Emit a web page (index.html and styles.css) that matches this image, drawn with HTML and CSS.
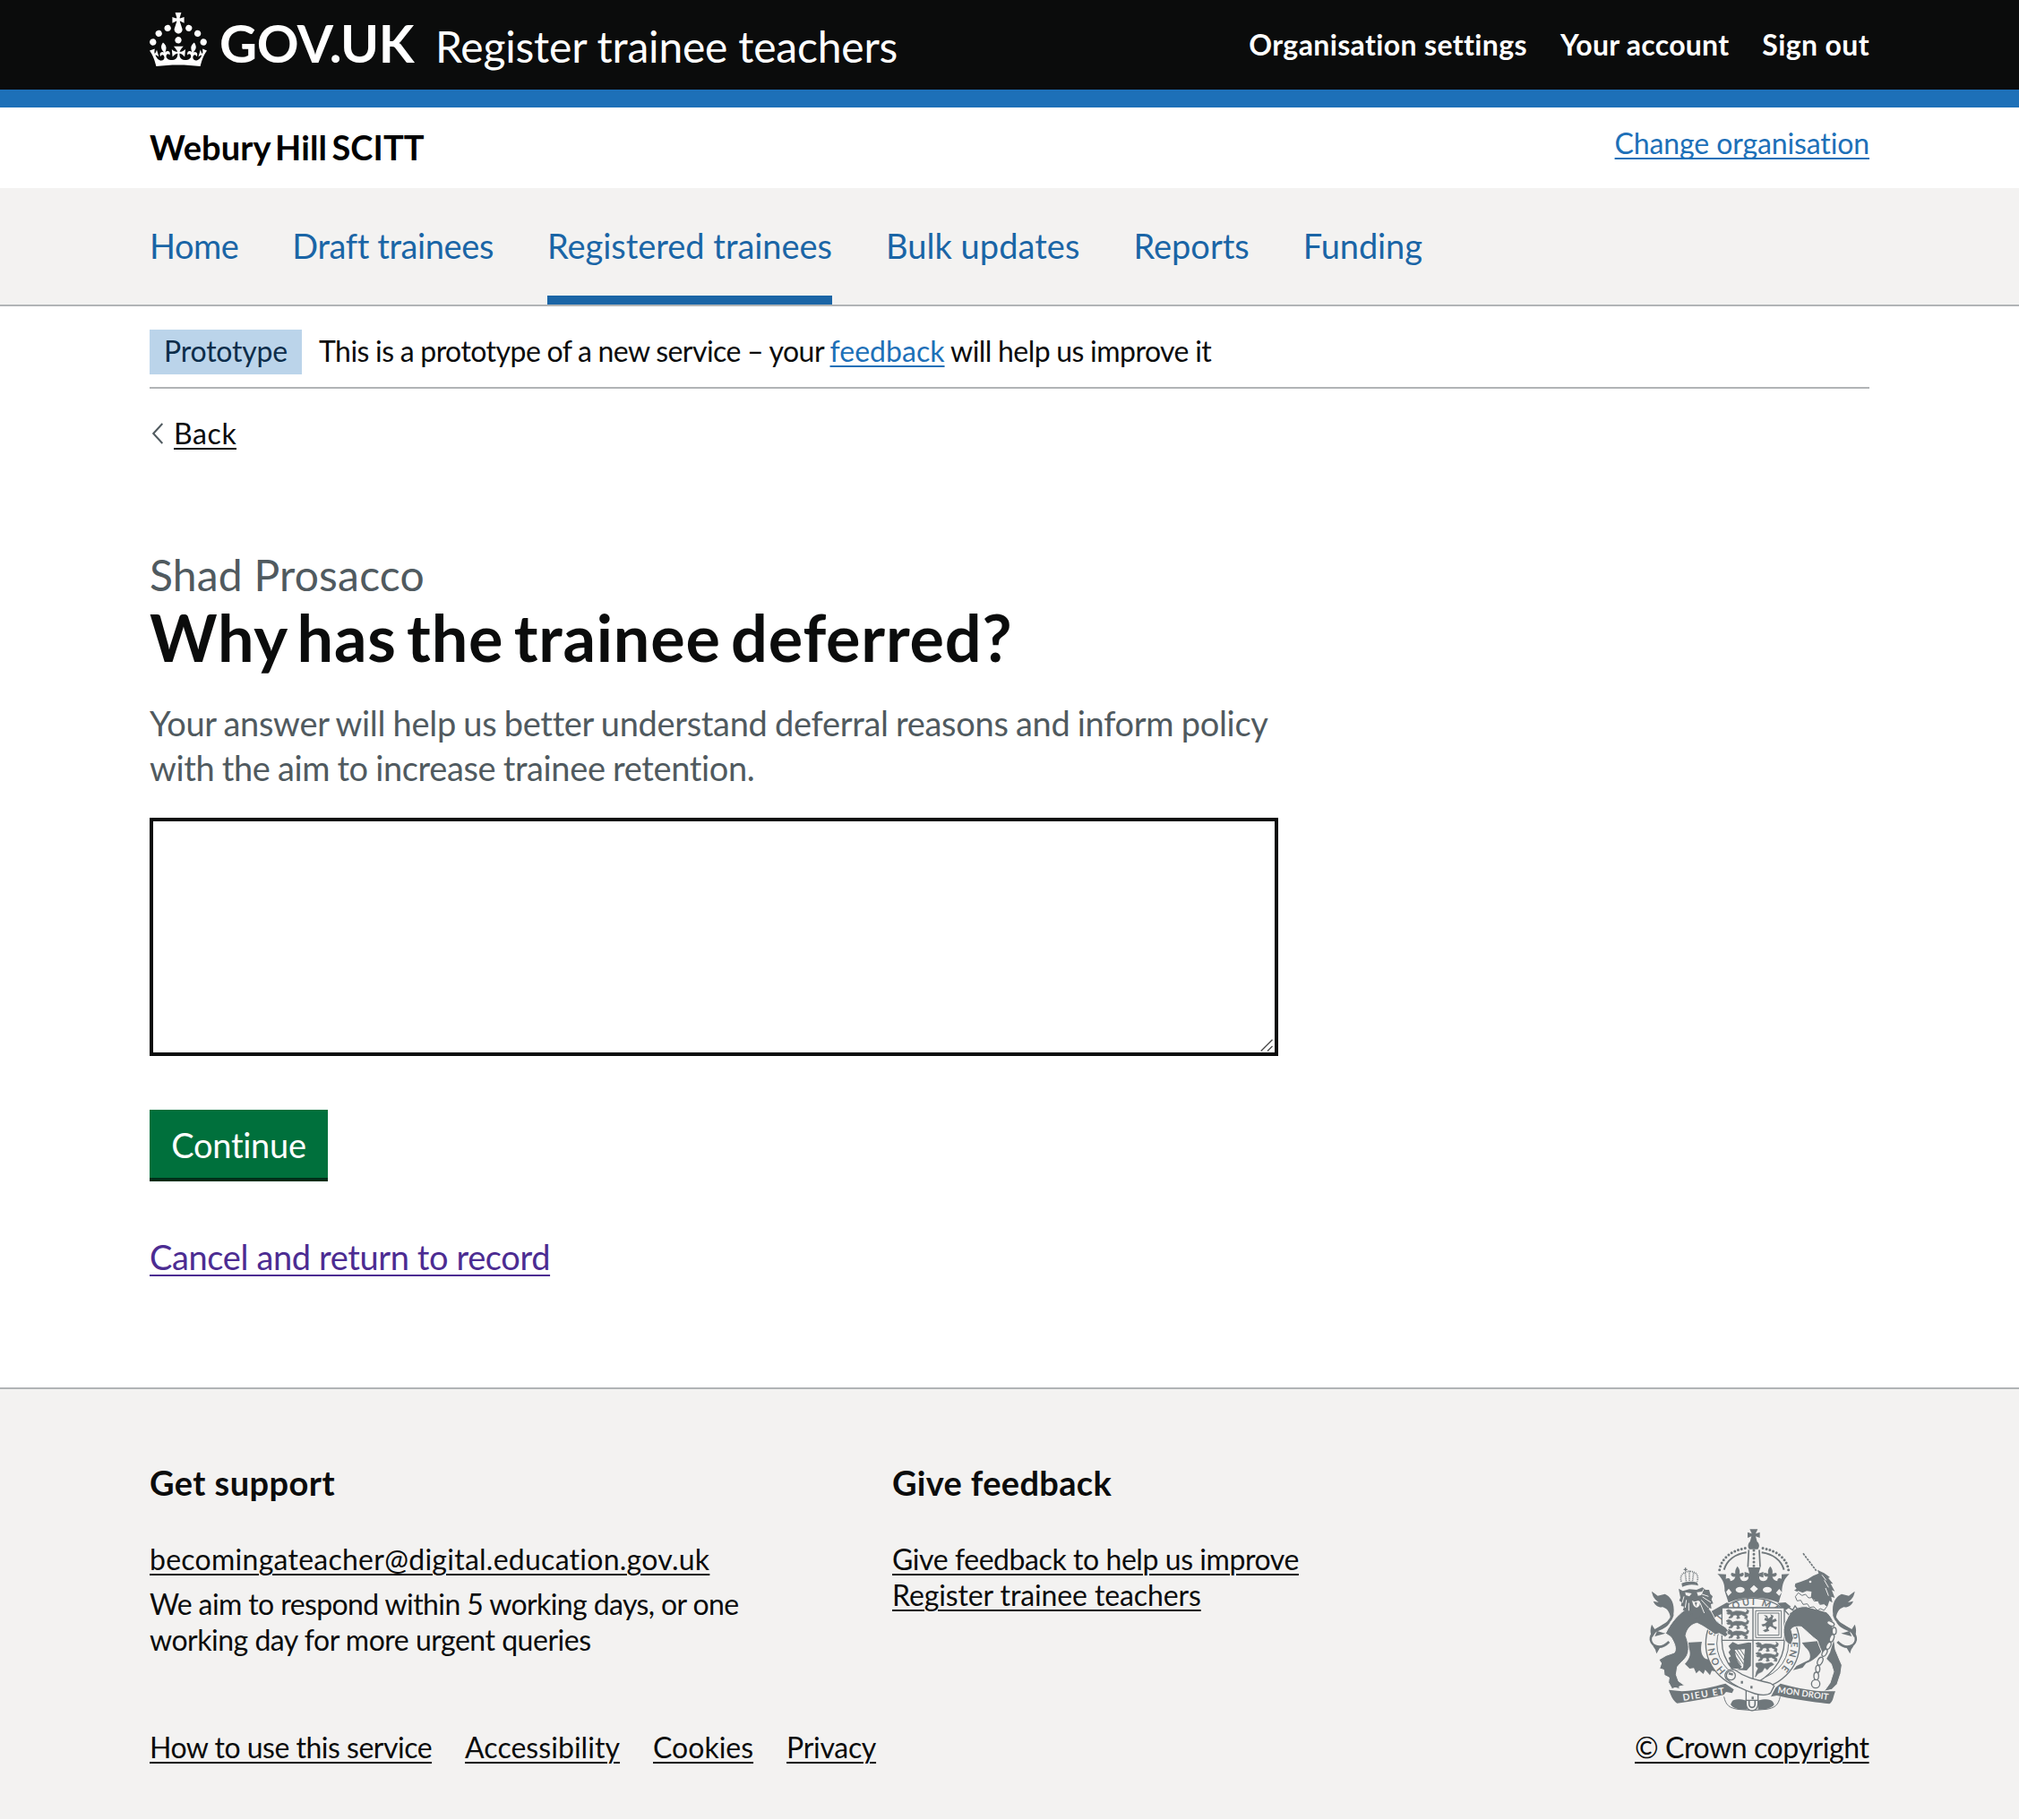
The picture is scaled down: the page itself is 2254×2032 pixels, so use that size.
FILE: index.html
```html
<!DOCTYPE html>
<html lang="en">
<head>
<meta charset="utf-8">
<title>Why has the trainee deferred? - Register trainee teachers</title>
<link rel="stylesheet" href="styles.css">
</head>
<body>
<header class="header">
  <div class="container header-inner">
    <a class="logo" href="#">
      <svg class="crown" viewBox="0 0 32 30" aria-hidden="true"><path fill="currentColor" d="M22.6 10.4c-1 .4-2-.1-2.4-1-.4-.9.1-2 1-2.4.9-.4 2 .1 2.4 1s-.1 2-1 2.4m-5.9 6.7c-.9.4-2-.1-2.4-1-.4-.9.1-2 1-2.4.9-.4 2 .1 2.4 1s-.1 2-1 2.4m10.8-3.7c-1 .4-2-.1-2.4-1-.4-.9.1-2 1-2.4.9-.4 2 .1 2.4 1s0 2-1 2.4m3.3 4.8c-1 .4-2-.1-2.4-1-.4-.9.1-2 1-2.4.9-.4 2 .1 2.4 1s-.1 2-1 2.4M17 4.7l2.3 1.2V2.5l-2.3.7-.2-.2.9-3h-3.4l.9 3-.2.2c-.1.1-2.3-.7-2.3-.7v3.4L15 4.7c.1.1.1.2.2.2l-1.3 4c-.1.2-.1.4-.1.6 0 1.1.8 2 1.9 2.2h.7c1-.2 1.9-1.1 1.9-2.1 0-.2 0-.4-.1-.6l-1.3-4c-.1-.2 0-.2.1-.3m-7.6 5.7c.9.4 2-.1 2.4-1 .4-.9-.1-2-1-2.4-.9-.4-2 .1-2.4 1s0 2 1 2.4m-5 3c.9.4 2-.1 2.4-1 .4-.9-.1-2-1-2.4-.9-.4-2 .1-2.4 1s.1 2 1 2.4m-3.2 4.8c.9.4 2-.1 2.4-1 .4-.9-.1-2-1-2.4-.9-.4-2 .1-2.4 1s0 2 1 2.4m14.8 11c4.4 0 8.6.3 12.3.8 1.1-4.5 2.4-7 3.7-8.8l-2.5-.9c.2 1.3.3 1.9 0 2.7-.4-.4-.8-1.1-1.1-2.3l-1.2 4c.7-.5 1.3-.8 2-.9-1.1 2.5-2.6 3.1-3.5 3-1.1-.2-1.7-1.2-1.5-2.1.3-1.2 1.5-1.5 2.1-.1 1.1-2.3-.8-3-2-2.3 1.9-1.9 2.1-3.5.6-5.6-2.1 1.6-2.1 3.2-1.2 5.5-1.2-1.4-3.2-.6-2.5 1.6.9-1.4 2.1-.5 1.9.8-.2 1.1-1.7 2.1-3.5 1.9-2.7-.2-2.9-2.1-2.9-3.6.7-.1 1.9.5 2.9 1.9l.4-4.3c-1.1 1.1-2.1 1.4-3.2 1.4.4-1.2 2.1-3 2.1-3h-5.4s1.7 1.9 2.1 3c-1.1 0-2.1-.2-3.2-1.4l.4 4.3c1-1.4 2.2-2 2.9-1.9-.1 1.5-.2 3.4-2.9 3.6-1.9.2-3.4-.8-3.5-1.9-.2-1.3 1-2.2 1.9-.8.7-2.3-1.2-3-2.5-1.6.9-2.2.9-3.9-1.2-5.5-1.5 2-1.3 3.7.6 5.6-1.2-.7-3.1 0-2 2.3.6-1.4 1.8-1.1 2.1.1.2.9-.3 1.9-1.5 2.1-.9.2-2.4-.5-3.5-3 .6 0 1.2.3 2 .9l-1.2-4c-.3 1.1-.7 1.9-1.1 2.3-.3-.8-.2-1.4 0-2.7l-2.9.9C1.3 23 2.6 25.5 3.7 30c3.7-.5 7.9-.8 12.3-.8"/></svg>
      <span class="logotype">GOV.UK</span>
    </a>
    <a class="service" href="#">Register trainee teachers</a>
    <nav class="account">
      <a href="#">Organisation settings</a>
      <a class="account-user" href="#">Your account</a>
      <a href="#">Sign out</a>
    </nav>
  </div>
</header>

<div class="container org">
  <div class="org-name">Webury Hill SCITT</div>
  <a class="link org-change" href="#">Change organisation</a>
</div>

<nav class="primary">
  <div class="container primary-list">
    <a class="home" href="#">Home</a>
    <a class="draft" href="#">Draft trainees</a>
    <a class="registered current" href="#">Registered trainees</a>
    <a class="bulk" href="#">Bulk updates</a>
    <a class="reports" href="#">Reports</a>
    <a class="funding" href="#">Funding</a>
  </div>
</nav>

<div class="container">
  <div class="phase">
    <strong class="tag">Prototype</strong>
    <span class="phase-text">This is a prototype of a new service – your <a class="link feedback" href="#">feedback</a> will help us improve it</span>
  </div>
  <a class="back" href="#"><svg class="chevron" viewBox="0 0 14 24" aria-hidden="true"><path d="M12.3 1 2.2 12l10.1 11" fill="none" stroke="#505a5f" stroke-width="2"/></svg><span class="back-text">Back</span></a>

  <main class="main">
    <h1 class="title"><span class="caption">Shad Prosacco</span>Why has the trainee deferred?</h1>
    <p class="hint"><span class="hint-first">Your answer will help us better understand deferral reasons and inform policy</span><br>with the aim to increase trainee retention.</p>
    <div class="field">
      <textarea class="textarea" aria-label="Why has the trainee deferred?"></textarea>
      <svg class="grip" viewBox="0 0 14 14" aria-hidden="true"><path d="M.7 13.5 13.5.7M8 13.5 13.5 8" fill="none" stroke="#4a4a4a" stroke-width="1.3"/></svg>
    </div>
    <button class="button" type="button">Continue</button>
    <p class="cancel"><a class="link" href="#">Cancel and return to record</a></p>
  </main>
</div>

<footer class="footer">
  <div class="container footer-inner">
    <div class="footer-main">
      <div class="footer-columns">
        <section>
          <h2 class="footer-heading support">Get support</h2>
          <a class="link email" href="#">becomingateacher@digital.education.gov.uk</a>
          <p class="footer-note">We aim to respond within 5 working days, or one<br><span class="note-last">working day for more urgent queries</span></p>
        </section>
        <section>
          <h2 class="footer-heading">Give feedback</h2>
          <a class="link give" href="#">Give feedback to help us improve<br><span class="give-last">Register trainee teachers</span></a>
        </section>
      </div>
      <nav class="footer-links">
        <a class="link howto" href="#">How to use this service</a>
        <a class="link access" href="#">Accessibility</a>
        <a class="link cookies" href="#">Cookies</a>
        <a class="link privacy" href="#">Privacy</a>
      </nav>
    </div>
    <div class="copyright">
      <svg class="crest" viewBox="-15 21 786 618" aria-hidden="true">
        <defs>
          <path id="motto" d="M291 499A128 128 0 1 1 469 499"/>
          <path id="passant" d="M0 4l8-4 9 3 4 6 12-4 18 1 14 4 6-6-3-5 8 5-2 9-10 4 8 5-2 9-9-2 4-5-13-7-10 3 4 9-9 2-2-4 4-2-5-7-9 1-5 8-11 2 2-5 5-2-2-7-8 1-4-4 6-2z"/>
          <g id="tail">
            <path d="M100 402C66 436 34 412 39 386c5-30 66-34 73-76" fill="none" stroke="#6f777b" stroke-width="8"/>
            <path d="M42 233l20 15 24-6c18 8 34 28 29 66l-10 24c0-24-8-40-26-46-14 2-26-5-32-20l18 4c-10-8-20-16-23-37zM42 344l10 16 32-18 20-6c-10 18-28 26-48 32l-12 20c-8-14-8-28-2-44zM60 366l28 8-36 10zM52 414l20 4-14 24-4-14-8-12z"/>
          </g>
        </defs>
        <g fill="#6f777b">
          <!-- royal crown -->
          <path d="M370 25h27l-7 15 14-5v19l-14-5 5 18c8 6 9 18 2 25h-28c-7-7-5-19 2-25l5-18-13 5V35l14 5z"/>
          <path d="M367 94l-3 58M402 94l3 58" stroke="#6f777b" stroke-width="5"/>
          <path d="M384 96v55" fill="none" stroke="#6f777b" stroke-width="9" stroke-linecap="round" stroke-dasharray="0 13"/>
          <path d="M269 161c6-38 40-66 90-73M500 161c-6-38-40-66-90-73" fill="none" stroke="#6f777b" stroke-width="9" stroke-linecap="round" stroke-dasharray="0 12"/>
          <path d="M284 161c10-32 38-53 75-58M485 161c-10-32-38-53-75-58" fill="none" stroke="#6f777b" stroke-width="6"/>
          <path d="M264 175l27 1-1 15c10-5 16-1 15 8 9-1 15-6 17-15-14 3-18-8-12-13l12 3c-2-10 2-18 7-25 6 7 9 15 7 25l12-4c5 8 1 15-11 14 1 9 6 15 14 15 11 0 16-6 15-15l-13 3v-19l16 5-5-20h42l-6 20 16-5v19l-14-4c-1 10 5 16 15 16 9-1 13-7 14-15-12 1-17-7-12-14l13 4c-2-10 1-18 7-25 6 7 9 15 7 25l12-3c6 5 2 15-12 13 2 9 8 14 17 15-1-9 5-13 14-8v-15l26-1c-16 15-25 32-25 60l-11 36c-58-22-114-22-168 0l-13-40c1-24-8-41-24-56z"/>
          <g fill="#f3f2f1">
            <ellipse cx="338" cy="228" rx="15" ry="10"/><ellipse cx="429" cy="228" rx="15" ry="10"/>
            <path d="M371 225l13-13 14 13-14 13zM291 235l9-11 10 13-12 12zM458 238l11-13 9 11-9 12z"/>
          </g>
          <!-- supporters' tails -->
          <use href="#tail"/>
          <use href="#tail" transform="matrix(-1 0 0 1 764 0)"/>
          <!-- hind legs -->
          <path d="M157 405l53-3c-6 25-3 48 14 58l40 4-8 17 11 23-24-5-6 15-16-18-6 14-14-12-10 10-8-18-14 2-16-16c18-18 24-40 8-60z"/>
          <path d="M545 405l52-5 20 22c-12 26-34 44-58 52l-12 15-32 8 12-14 42-20c8-12 2-32-13-43z"/>
          <!-- garter -->
          <ellipse cx="380" cy="408" rx="157" ry="152" fill="#f3f2f1" stroke="#6f777b" stroke-width="4"/>
          <circle cx="380" cy="408" r="120" fill="none" stroke="#6f777b" stroke-width="3"/>
          <text class="motto"><textPath href="#motto" textLength="598">HONI SOIT QUI MAL Y PENSE</textPath></text>
          <path d="M235 326l8-27 50-28 8 2-2 26-42 18zM462 272l28-2 18 14-20 14z"/>
          <!-- shield -->
          <path d="M277 288h209v112c0 76-60 124-105 146-45-22-104-70-104-146z" fill="#f3f2f1" stroke="#6f777b" stroke-width="4"/>
          <path d="M381 288v258M277 397h209" stroke="#6f777b" stroke-width="4"/>
          <g stroke="#6f777b" stroke-width="2">
            <use href="#passant" x="291" y="294"/><use href="#passant" x="291" y="328"/><use href="#passant" x="291" y="361"/>
            <use href="#passant" x="390" y="404"/><use href="#passant" x="390" y="437"/>
            <path d="M391 474l16-2 12 4 24-4 8 6-14 8-8 10-9-8-8 14-13 6-10 12 4-18 6-11-8-7z"/>
          </g>
          <path d="M390 298h86v90h-86zM398 306h70v74h-70z" fill="none" stroke="#6f777b" stroke-width="3"/>
          <path d="M417 312l12 3 3 10 10-8-3-7 11 5-5 14 12-5 4 8-14 6 2 11 12 4-3 9-10-7-10-5-7 8 5 7-14 5-8-6 12-5-2-10-10 2-5-7 12-3 8-7-10-5 3-8 7 3z"/>
          <path d="M299 416l14-13 18 8 36-7 8 2-1 76-14 16-34-2 22-6 6-63-34 2c4 26 8 42 24 56l-6 8-30-2-13-18 10-1-6-16 8-5-8-14 7-9z"/>
          <path d="M318 430l32 48M326 426l28 42M336 424l20 30M314 440l26 38" stroke="#6f777b" stroke-width="3"/>
          <!-- lion -->
          <path d="M182 292l50-2c14 10 18 34 30 46l28 18 8 10-6 6 6 8-10 8-20-12-14 4-10-8-30-20-20-10c-22 4-34 20-38 42 6 14 14 42 6 62-4 14-26 30-34 42l-4 26 8 22 20 14-18 4 2 8-16-4-10 4-12-22 2-16-16-8-2-18-14-4 6-18-8-12 24-14 28-10c8-14 0-32-12-52l-18-12c20-40 44-66 78-88z" stroke="#f3f2f1" stroke-width="3"/>
          <path d="M132 224l14 8 22-6 24 2 20-8 10 8 12 0 4 14 8 8-4 10 6 14-8 2 2 16-8-4-4 14-8-4-8 14-8-10-4 18-18 6-8-22-8 14-8-22-14 2 4-14-10-2 2-12-8-6 4-10z"/>
          <path d="M216 226l-8 16 24 8M212 252l28 18M208 262l24 26M204 272l14 34M150 250l-6 22M158 262l-4 26M166 272l0 26" fill="none" stroke="#f3f2f1" stroke-width="3"/>
          <path d="M154 236l22 4-8 10-12-4zM193 236l20-2-6 12-10 2zM176 264l10 4 12-4 6 4c0 26-22 26-26 0z" fill="#f3f2f1"/>
          <path d="M186 270h8l-4 14z"/>
          <path d="M142 206c14-6 34-8 52-3l4 11c-20-6-36-4-54 4z"/>
          <path d="M141 200c-6-18 4-32 26-34 24 0 34 14 27 34M168 164v36M154 172l4 30M182 172l-4 30" fill="none" stroke="#6f777b" stroke-width="5" stroke-dasharray="3 3"/>
          <path d="M155 154v12M149 160h12" stroke="#6f777b" stroke-width="4"/>
          <!-- unicorn -->
          <path d="M489 398c-8-22-8-50 4-68 12-28 30-48 66-46l68 18c22 20 34 46 24 80l6 46 14 34 8 18-4 28-12 36-18 18-26 6 20-28 12-38-8-26c-24-20-36-46-46-78-20-14-36-32-54-46-14-2-28 0-34 8l8 30-8 22-8-2z" stroke="#f3f2f1" stroke-width="3"/>
          <path d="M523 207l18-6 22-8 20-12 18-8-4-12 22 11 20 14-6 2 16 20-8-1 14 26-10-4 10 26-12-4 4 20-10-6-6 18-14-1-42-28 2-20-16-2-14 6-14-6-4 2-10-4 8-6-6-8z"/>
          <path d="M612 178l14 18M620 196l14 24M624 222l10 26" stroke="#f3f2f1" stroke-width="3"/>
          <circle cx="573" cy="201" r="4" fill="#f3f2f1"/>
          <path d="M549 106l44 58" stroke="#6f777b" stroke-width="5" stroke-dasharray="8 3"/>
          <path d="M533 238l12 9 12-4 10 12 12-1 7 12 13-1 6 12 14-2 10 8-10 14-12-6-10 6-12-12-14 2-8-12-14 2-8-14-12 2-6-14z" fill="#f3f2f1" stroke="#6f777b" stroke-width="3"/>
          <path d="M500 286l14 10 8-14 8 10M505 308l16-6" fill="none" stroke="#6f777b" stroke-width="4"/>
          <!-- chain -->
          <path d="M632 338c20-6 22 20 20 38l-18 60-22 40-20 60" fill="none" stroke="#f3f2f1" stroke-width="11"/>
          <g fill="#f3f2f1" stroke="#6f777b" stroke-width="4">
            <ellipse cx="641" cy="341" rx="13" ry="7" transform="rotate(25 641 341)"/>
            <ellipse cx="653" cy="366" rx="7" ry="12"/><ellipse cx="645" cy="390" rx="7" ry="13" transform="rotate(20 645 390)"/>
            <ellipse cx="634" cy="415" rx="7" ry="13" transform="rotate(25 634 415)"/><ellipse cx="621" cy="439" rx="7" ry="13" transform="rotate(30 621 439)"/>
            <ellipse cx="606" cy="467" rx="8" ry="14" transform="rotate(25 606 467)"/><ellipse cx="598" cy="493" rx="7" ry="12"/>
            <ellipse cx="593" cy="517" rx="8" ry="13"/><circle cx="591" cy="543" r="14"/>
          </g>
          <!-- buckled strap -->
          <g fill="#f3f2f1" stroke="#6f777b" stroke-width="4">
            <path d="M358 562h40v40l-20 26-20-26z"/>
            <path d="M322 497c40 30 80 34 118 44l12 9-12 24c-10 8-34 8-52 2-32-10-72-28-97-50-10-16 4-38 31-29z"/>
            <circle cx="307" cy="515" r="15"/>
          </g>
          <path d="M300 508l14 4M344 533v9M376 550v9M380 586v9" fill="none" stroke="#6f777b" stroke-width="7"/>
          <!-- scroll -->
          <path d="M99 563l44 5c60-4 104-15 146-26l28 20-6 12-20-4-8 10c-52 12-100 21-156 28-14-10-20-24-28-45z"/>
          <path d="M657 568l-42 0c-60-5-104-15-142-26l-16 14-16 30 20-4c50 12 108 20 176 28 14-8 12-24 20-42z"/>
          <path d="M310 604c4-12 30-10 48-5l4 30c-28 2-48-4-56-17zM398 599c20-5 42-7 50 5l4 8c-8 13-30 18-54 17z"/>
          <path d="M284 586c6 30 20 38 46 42l48 4 48-4c26-4 40-12 46-42" fill="none" stroke="#6f777b" stroke-width="3"/>
          <path d="M358 598h40v12c0 30-40 30-40 0z" fill="#f3f2f1" stroke="#6f777b" stroke-width="4"/>
          <path d="M368 600v10c0 16 20 16 20 0v-10" fill="none" stroke="#6f777b" stroke-width="5"/>
        </g>
        <text class="scroll-text" transform="translate(148 600) rotate(-9.5)" textLength="140">DIEU ET</text>
        <text class="scroll-text narrow" transform="translate(463 573) rotate(8)" textLength="171">MON DROIT</text>
      </svg>
      <a class="link crown-link" href="#">© Crown copyright</a>
    </div>
  </div>
</footer>
</body>
</html>
```
FILE: styles.css
```css
* { box-sizing: border-box; }

body {
  margin: 0;
  background: #fff;
  color: #0b0c0c;
  font: 32px/40px Lato, "Noto Sans", sans-serif;
  font-variant-ligatures: none;
}

a { color: inherit; text-decoration: none; }
h1, h2, p { margin: 0; }

.container { width: 1920px; margin: 0 auto; }

.link {
  text-decoration: underline;
  text-decoration-thickness: 2px;
  text-underline-offset: 4px;
}

/* Header */
.header {
  height: 120px;
  background: #0b0c0c;
  border-bottom: 20px solid #1d70b8;
  color: #fff;
}
.header-inner { display: flex; align-items: flex-start; }
.logo { display: flex; width: 319px; }
.crown { width: 64px; height: 60px; margin: 14px 14px 0 0; }
.logotype {
  padding-top: 18px;
  font-size: 58px;
  line-height: 60px;
  font-weight: 700;
  letter-spacing: -.4px;
}
.service {
  padding-top: 22px;
  font-size: 48px;
  line-height: 60px;
  letter-spacing: -.2px;
}
.account {
  display: flex;
  gap: 37px;
  margin-left: auto;
  padding-top: 30px;
  font-weight: 700;
  letter-spacing: .37px;
}
.account-user { letter-spacing: .26px; }

/* Organisation bar */
.org { display: flex; justify-content: space-between; height: 90px; }
.org-name {
  padding-top: 19px;
  color: #000;
  font-size: 38px;
  line-height: 50px;
  font-weight: 700;
  letter-spacing: .1px;
  word-spacing: -4px;
}
.org-change {
  padding-top: 20px;
  color: #1d70b8;
  letter-spacing: -.12px;
  text-decoration-skip-ink: none;
}

/* Primary navigation */
.primary { background: #f3f2f1; border-bottom: 2px solid #b1b4b6; }
.primary-list { display: flex; gap: 60px; color: #1a65a6; font-size: 38px; line-height: 50px; }
.primary-list a { height: 130px; padding-top: 39px; }
.primary-list .current { border-bottom: 10px solid #1a65a6; }
.home { letter-spacing: -.5px; }
.draft { letter-spacing: -.4px; }
.registered { letter-spacing: -.03px; }
.bulk { letter-spacing: .05px; }
.reports { letter-spacing: 0; }
.funding { letter-spacing: -.12px; }

/* Phase banner */
.phase {
  display: flex;
  gap: 19px;
  padding: 26px 0 14px;
  border-bottom: 2px solid #b1b4b6;
  line-height: 47px;
}
.tag {
  width: 170px;
  height: 50px;
  background: #bbd4ea;
  color: #0c2d4a;
  font-weight: 400;
  letter-spacing: -.2px;
  text-align: center;
}
.phase-text { height: 50px; letter-spacing: -.53px; word-spacing: -.5px; }
.feedback { color: #1d70b8; letter-spacing: .03px; }

.back { display: flex; width: fit-content; margin-top: 29px; }
.chevron { width: 14px; height: 24px; margin: 9px 11px 0 2px; }
.back-text { height: 39px; padding-top: 1px; border-bottom: 2px solid; letter-spacing: .6px; }

/* Question */
.main { width: 1260px; padding: 110px 0 122px; }
.title {
  font-size: 72px;
  line-height: 76px;
  font-weight: 700;
  letter-spacing: .8px;
  word-spacing: -7px;
}
.caption {
  display: block;
  margin-bottom: 1px;
  color: #505a5f;
  font-size: 48px;
  line-height: 60px;
  font-weight: 400;
  letter-spacing: .2px;
  word-spacing: 0;
}
.hint {
  margin-top: 33px;
  color: #505a5f;
  font-size: 38px;
  line-height: 50px;
  letter-spacing: -.36px;
  word-spacing: -1px;
  white-space: nowrap;
}
.hint-first { letter-spacing: -.31px; }
.field { position: relative; height: 266px; margin-top: 31px; }
.textarea {
  display: block;
  width: 100%;
  height: 100%;
  padding: 10px;
  border: 4px solid #0b0c0c;
  border-radius: 0;
  font: inherit;
  resize: none;
}
.grip { position: absolute; right: 6px; bottom: 5px; width: 14px; height: 14px; }
.button {
  display: block;
  width: 199px;
  height: 76px;
  margin-top: 60px;
  padding: 2px 0 0;
  border: 0;
  background: #00703c;
  box-shadow: 0 4px 0 #002d18;
  color: #fff;
  font: 38px/50px Lato, "Noto Sans", sans-serif;
  letter-spacing: -.29px;
}
.cancel {
  margin-top: 63px;
  margin-bottom: -1px;
  color: #4c2c92;
  font-size: 38px;
  line-height: 50px;
  letter-spacing: -.38px;
}
.cancel .link { text-underline-offset: 5px; }

/* Footer */
.footer { min-height: 482px; background: #f3f2f1; border-top: 2px solid #b1b4b6; }
.footer-inner { display: flex; height: 420px; align-items: flex-end; }
.footer-main { flex: 1; height: 420px; padding-top: 79px; white-space: nowrap; }
.footer-columns { display: grid; grid-template-columns: 829px 1fr; }
.footer-heading {
  margin-bottom: 41px;
  font-size: 38px;
  line-height: 50px;
  font-weight: 700;
  letter-spacing: .32px;
}
.support { letter-spacing: .43px; }
.email { letter-spacing: .26px; }
.footer-note { margin-top: 10px; letter-spacing: -.6px; }
.note-last { letter-spacing: -.49px; }
.give { letter-spacing: -.43px; }
.give-last { letter-spacing: -.11px; }
.footer-links { display: flex; gap: 37px; margin-top: 80px; }
.howto { letter-spacing: -.5px; }
.access { letter-spacing: .05px; }
.privacy { letter-spacing: -.3px; }
.copyright { width: 262px; }
.crest { display: block; width: 262px; height: 206px; margin-bottom: 19px; }
.crown-link { display: block; letter-spacing: -.4px; white-space: nowrap; }
.motto { font: 700 32px Lato, sans-serif; }
.scroll-text { fill: #f3f2f1; font: 700 31px Lato, sans-serif; }
.narrow { font-size: 29px; }
```
